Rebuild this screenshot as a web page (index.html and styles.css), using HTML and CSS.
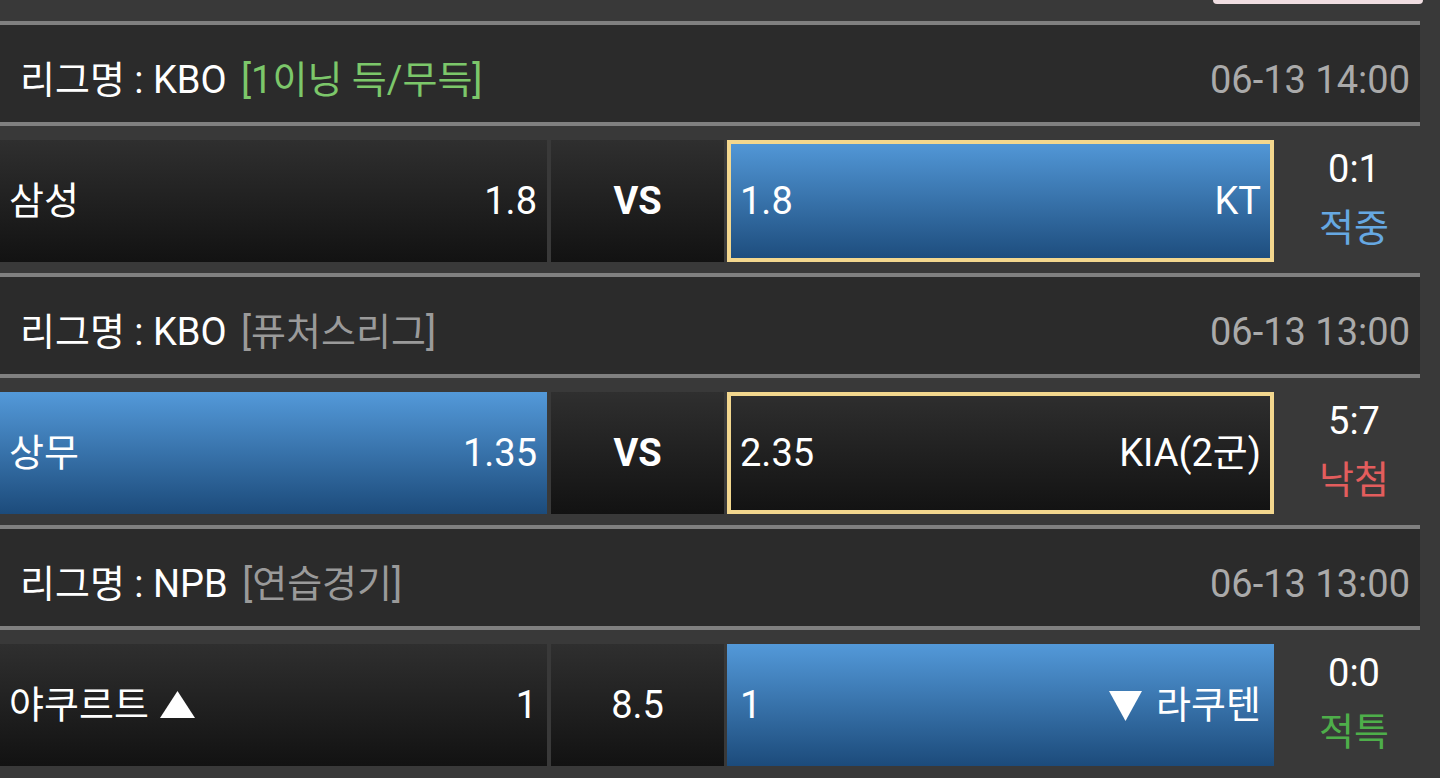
FILE: index.html
```html
<!DOCTYPE html>
<html lang="ko">
<head>
<meta charset="utf-8">
<title>경기 결과</title>
<link rel="stylesheet" href="styles.css">
</head>
<body>
<div class="page">
  <div class="topbar"><div class="topbtn"></div></div>

  <section class="game">
    <div class="league">
      <span class="txt">리그명 : KBO <span class="tag tag-green">[1이닝 득/무득]</span></span>
      <span class="txt date">06-13 14:00</span>
    </div>
    <div class="match">
      <div class="cell home dark"><span class="txt">삼성</span><span class="txt">1.8</span></div>
      <div class="cell mid dark"><span class="txt vs">VS</span></div>
      <div class="cell away blue picked"><span class="txt">1.8</span><span class="txt">KT</span></div>
      <div class="result"><span class="txt score">0:1</span><span class="txt status hit">적중</span></div>
    </div>
  </section>

  <section class="game">
    <div class="league">
      <span class="txt">리그명 : KBO <span class="tag tag-gray">[퓨처스리그]</span></span>
      <span class="txt date">06-13 13:00</span>
    </div>
    <div class="match">
      <div class="cell home blue"><span class="txt">상무</span><span class="txt">1.35</span></div>
      <div class="cell mid dark"><span class="txt vs">VS</span></div>
      <div class="cell away dark picked"><span class="txt">2.35</span><span class="txt">KIA(2군)</span></div>
      <div class="result"><span class="txt score">5:7</span><span class="txt status miss">낙첨</span></div>
    </div>
  </section>

  <section class="game">
    <div class="league">
      <span class="txt">리그명 : NPB <span class="tag tag-gray">[연습경기]</span></span>
      <span class="txt date">06-13 13:00</span>
    </div>
    <div class="match">
      <div class="cell home dark"><span class="txt">야쿠르트<svg class="tri tri-up" viewBox="0 0 35 27" aria-hidden="true"><polygon points="17.5,0 35,27 0,27" fill="#fff"/></svg></span><span class="txt">1</span></div>
      <div class="cell mid dark"><span class="txt">8.5</span></div>
      <div class="cell away blue"><span class="txt">1</span><span class="txt"><svg class="tri tri-down" viewBox="0 0 33 30" aria-hidden="true"><polygon points="0,0 33,0 16.5,30" fill="#fff"/></svg>라쿠텐</span></div>
      <div class="result"><span class="txt score">0:0</span><span class="txt status void">적특</span></div>
    </div>
  </section>
</div>
</body>
</html>
```

FILE: styles.css
```css
html, body {
  margin: 0;
  padding: 0;
  background: #393939;
}

.page {
  width: 1440px;
  height: 778px;
  overflow: hidden;
  font-family: "Roboto", "Noto Sans CJK KR", sans-serif;
  font-size: 38px;
  color: #ffffff;
  background: #393939;
}

.topbar {
  height: 21px;
  display: flex;
  justify-content: flex-end;
  padding-right: 17px;
}

.topbtn {
  width: 210px;
  height: 4px;
  background: #efdde1;
  border-radius: 0 0 10px 10px;
}

.game {
  width: 1420px;
}

.league {
  border-top: 4px solid #808080;
  border-bottom: 4px solid #808080;
  background: #2b2b2b;
  display: flex;
  align-items: center;
  justify-content: space-between;
  padding: 12px 10px 0 20px;
  box-sizing: content-box;
  height: 85px;
  line-height: 1;
}

.txt {
  display: inline-block;
  white-space: nowrap;
}

.tag { margin-left: 5px; }
.tag-green { color: #7cc76a; }
.tag-gray { color: #9a9a9a; }
.date { color: #aaaaaa; }

.match {
  height: 147px;
  padding-top: 14px;
  box-sizing: border-box;
  display: flex;
  align-items: flex-start;
}

.cell {
  height: 122px;
  box-sizing: border-box;
  display: flex;
  align-items: center;
  justify-content: space-between;
  line-height: 1;
}

.home {
  width: 547px;
  margin-right: 4px;
  padding: 0 10px 0 9px;
}

.mid {
  width: 173px;
  margin-right: 3px;
  justify-content: center;
}

.away {
  width: 547px;
  padding: 0 13px 0 13px;
}

.dark {
  background: linear-gradient(#2f2f2f, #121212);
}

.blue {
  background: linear-gradient(#5399d9, #1c4b7b);
}

.picked {
  box-shadow: inset 0 0 0 4px #f3d78e;
}

.vs {
  font-weight: 700;
}

.tri {
  display: inline-block;
}
.tri-up {
  width: 35px;
  height: 27px;
  margin-left: 11px;
  vertical-align: 0;
}
.tri-down {
  width: 33px;
  height: 30px;
  margin-right: 14px;
  vertical-align: -3px;
}

.result {
  flex: 1;
  height: 122px;
  padding: 0 0 4px 14px;
  box-sizing: border-box;
  display: flex;
  flex-direction: column;
  align-items: center;
  justify-content: center;
  line-height: 59px;
}

.hit { color: #66a8e2; }
.miss { color: #e35d5d; }
.void { color: #4eae4a; }
```
